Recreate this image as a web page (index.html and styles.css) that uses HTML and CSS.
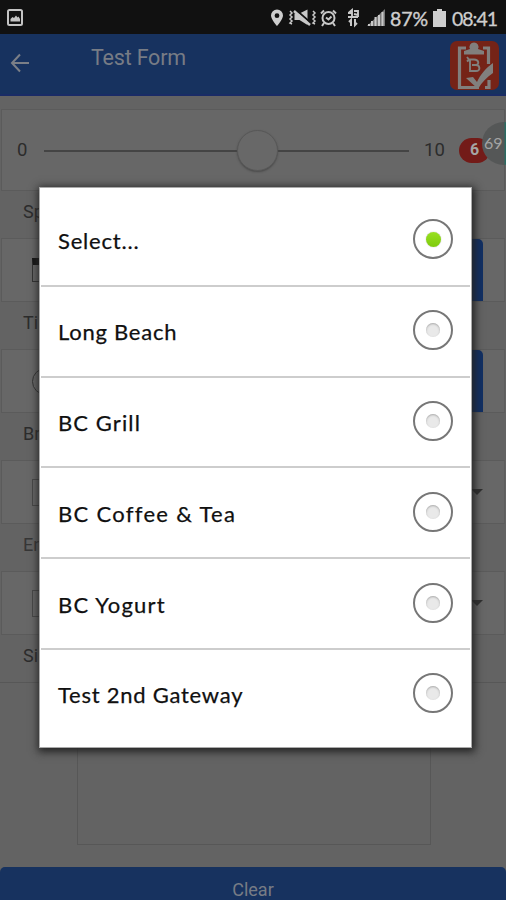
FILE: index.html
```html
<!DOCTYPE html>
<html lang="en">
<head>
<meta charset="utf-8">
<title>Test Form</title>
<link rel="stylesheet" href="styles.css">
</head>
<body>
<div class="screen">
  <div class="status">
    <svg class="status-left" width="20" height="20" viewBox="0 0 20 20"><rect x="2" y="2" width="14" height="15" rx="1.5" fill="none" stroke="#c4c4c4" stroke-width="2"/><path d="M4.5 13.5V11l2-2 1.5 1 2-2.500 1.500 2 1-1 1.500 2.500v2.500z" fill="#c4c4c4"/></svg>
    <svg class="status-icons" width="116" height="26" viewBox="0 0 116 26" fill="none" stroke="#c8c8c8">
      <path d="M7 1.500a6 6 0 0 0-6 6C1 11.500 7 18 7 18s6-6.500 6-10.500a6 6 0 0 0-6-6zm0 3.800a2.400 2.400 0 1 1 0 4.800 2.400 2.400 0 0 1 0-4.800z" fill="#cecece" stroke="none"/>
      <path d="M20 3l2 2-2 2 2 2-2 2 2 2-2 2 2 1M43 3l2 2-2 2 2 2-2 2 2 2-2 2 2 1" stroke-width="1.500"/>
      <path d="M24.500 5.500h5l8-4v15.500l-8-5h-5z" fill="#c8c8c8" stroke="none"/><path d="M26 2l15 13" stroke="#121212" stroke-width="2"/><path d="M24 3l16 14" stroke-width="2.400"/>
      <circle cx="58.500" cy="10" r="6" stroke-width="2"/><path d="M56 9.500l2.500 2 3-3M51 5.500l3-3M66 5.500l-3-3M54 15l-2 3M63 15l2 3" stroke-width="2"/>
      <path d="M79 4.500l3-2.500v8M78 5h4M84 3h4v6M78 9h10M84 6l4 1" stroke-width="1.900"/><path d="M81 18v-6l-2 2M85 11v6l2-2" stroke-width="2"/>
      <path d="M97 18L115 1v17z" fill="#777" stroke="none"/><path d="M99 18v-2M102 18v-5M105.500 18v-9M109 18V7M112.500 18V4" stroke-width="2"/>
    </svg>
    <span class="percent">87%</span>
    <svg class="battery" width="13" height="18" viewBox="0 0 13 18"><path d="M4 0h5v2h4v16H0V2h4z" fill="#cecece"/></svg>
    <span class="clock">08:41</span>
  </div>
  <div class="header">
    <svg class="back" width="20" height="20" viewBox="0 0 20 20" fill="none" stroke="#7b7f87" stroke-width="2"><path d="M10 1.500L2 10l8 8.500M2 10h17"/></svg>
    <span class="title">Test Form</span>
    <svg class="logo" width="50" height="50" viewBox="0 0 50 50">
      <rect x="0" y="0" width="49" height="49" rx="7" fill="#752317"/>
      <path d="M16 7H9.500v39.500H29M33 7h5.500v16M39 39v7.500H35" fill="none" stroke="#817f7d" stroke-width="3.200"/>
      <path d="M14 13.500V10l6-2a4.500 4.500 0 1 1 8 0l6 2v3.500z" fill="#817f7d"/>
      <path d="M20 18v12h6c5 0 4-6 0-6h-4 3c5 0 4-5.500-1-5.500h-5l-2 2M17 16l3 4" fill="none" stroke="#817f7d" stroke-width="1.900"/>
      <path d="M16 37l7-1 4 5C30 34 36 27 43 22v10c-6 4-11 9-15 16z" fill="#817f7d"/>
    </svg>
  </div>
  <div class="card slider">
    <span class="min">0</span>
    <div class="track"><i class="thumb"></i></div>
    <span class="max">10</span>
    <span class="value">6</span>
    <span class="bubble">69</span>
  </div>
  <div class="label">Sp</div>
  <div class="card field"><i class="calendar"></i><i class="pick"></i></div>
  <div class="label">Ti</div>
  <div class="card field"><i class="time"></i><i class="pick"></i></div>
  <div class="label">Br</div>
  <div class="card field"><i class="box"></i><i class="caret"></i></div>
  <div class="label faint">En</div>
  <div class="card field"><i class="box"></i><i class="caret"></i></div>
  <div class="label last">Si</div>
  <div class="signature"></div>
  <div class="clear">Clear</div>

  <div class="dialog">
    <div class="option"><span class="t1">Select...</span><i class="radio on"></i></div>
    <div class="option"><span class="t2">Long Beach</span><i class="radio"></i></div>
    <div class="option"><span class="t3">BC Grill</span><i class="radio"></i></div>
    <div class="option"><span class="t4">BC Coffee &amp; Tea</span><i class="radio"></i></div>
    <div class="option"><span class="t5">BC Yogurt</span><i class="radio"></i></div>
    <div class="option"><span class="t6">Test 2nd Gateway</span><i class="radio"></i></div>
  </div>
</div>
</body>
</html>
```
FILE: styles.css
```css
* { box-sizing: border-box; }
body { margin: 0; font-family: Roboto, "Liberation Sans", sans-serif; }
.screen { position: relative; width: 506px; height: 900px; overflow: hidden; background: #636363; color: #2c2c2c; }
.status { height: 34px; display: flex; align-items: flex-start; background: #111; color: #cecece; font-family: Lato, sans-serif; font-size: 19.5px; line-height: 20px; padding: 8px 0 0 6px; }
.status-left { margin-right: 244px; }
.status-icons { flex: none; }
.percent { width: 37px; margin: 1px 0 0 4px; -webkit-text-stroke: .4px; }
.battery { margin: 1px 6px 0 6px; flex: none; }
.clock { margin-top: 1px; white-space: nowrap; letter-spacing: -1px; -webkit-text-stroke: .3px; }
.header { height: 62px; background: #17325f; display: flex; align-items: flex-start; border-bottom: 2px solid #1a2c66; }
.back { margin: 19px 0 0 10px; }
.title { margin: 11px 0 0 61px; width: 359px; font-size: 21.5px; letter-spacing: -.2px; line-height: 26px; color: #777c85; }
.logo { flex: none; margin-top: 7px; }
.card { background: #676767; border: 1px solid #5b5b5b; margin: 0 1px 0 1px; }
.slider { height: 82px; margin-top: 13px; display: flex; align-items: center; font-size: 18.5px; position: relative; }
.min { width: 42px; padding-left: 15px; }
.track { position: relative; width: 365px; height: 2px; background: #444; margin-top: 1px; }
.thumb { position: absolute; left: 193px; top: -20px; width: 41px; height: 41px; border-radius: 50%; background: #686868; border: 1px solid #585858; box-shadow: 0 1px 2px #4a4a4a; }
.max { margin-left: 15px; width: 35px; }
.value { width: 31px; height: 25px; border-radius: 13px; background: #731b18; color: #a5a5a5; font-size: 16px; font-weight: 700; line-height: 24px; text-align: center; }
.bubble { position: absolute; left: 480px; top: 12px; width: 43px; height: 43px; border-radius: 50%; background: linear-gradient(90deg, #555757 22px, #2b6b62 23px); color: #a4a4a4; font: 16px/42px Lato, sans-serif; padding-left: 2px; clip-path: inset(0 19px 0 0); }
.label { height: 47px; padding: 9px 0 0 23px; font-size: 18px; line-height: 24px; }
.field { height: 64px; margin-top: 0; display: flex; align-items: center; justify-content: space-between; padding: 0 21px 0 30px; border-right-color: #5e5e5e; }
.label.faint { color: #363636; }
.label.last { border-bottom: 1px solid #575757; height: 48px; }
.pick { width: 30px; height: 62px; background: #102f64; border-radius: 0 5px 0 0; }
.calendar { width: 24px; height: 24px; border: 1px solid #333; border-top: 7px solid #161616; }
.time { width: 27px; height: 27px; border: 1px solid #333; border-radius: 50%; }
.box { width: 26px; height: 27px; border: 1px solid #484848; }
.caret { border: 6px solid transparent; border-top-color: #303030; border-bottom: 0; }
.signature { width: 354px; height: 162px; border: 1px solid #575757; border-top: 0; margin: 0 0 22px 77px; }
.clear { height: 50px; border-radius: 5px 5px 0 0; background: #17325f; color: #777c85; text-align: center; font-size: 18px; line-height: 46px; }
.dialog { position: absolute; left: 39px; top: 187px; width: 433px; height: 561px; padding: 8px 1px 0; background: #fff; border: 1px solid #aaa; box-shadow: 1px 2px 8px 2px #242424; }
.option { height: 90.8px; display: flex; align-items: center; justify-content: space-between; padding: 0 17px 2px; border-bottom: 2px solid #cdcdcd; color: #101010; font: 22px/28px "Choco Cooky", Lato, sans-serif; white-space: nowrap; }
.option:last-child { border: 0; padding-bottom: 4px; }
.option span { margin-top: 4px; -webkit-text-stroke: .25px; }
.t1 { letter-spacing: .8px; }
.t2 { letter-spacing: .75px; }
.t3 { letter-spacing: 1.1px; }
.t4 { letter-spacing: 1.3px; }
.t5 { letter-spacing: 1.2px; }
.t6 { letter-spacing: .75px; }
.radio { flex: none; width: 40px; height: 40px; border: 2px solid #777; border-radius: 50%; display: flex; align-items: center; justify-content: center; }
.radio::before { content: ""; width: 14px; height: 14px; border-radius: 50%; background: #e9e9e9; box-shadow: inset 0 1px 2px #aaa; }
.radio.on::before { width: 15px; height: 15px; background: linear-gradient(#98e021, #7ecb0c); box-shadow: 0 0 1px #888; }
```
